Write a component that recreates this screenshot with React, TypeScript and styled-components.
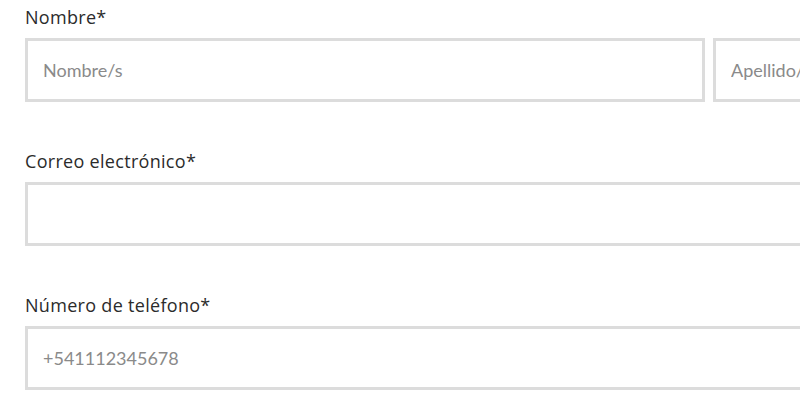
import React from "react";
import styled, { createGlobalStyle } from "styled-components";

const Global = createGlobalStyle`
  html, body { margin: 0; padding: 0; background: #fff; overflow: hidden; }
  body { font-family: "Lato", "Noto Sans", sans-serif; }
`;

const Form = styled.form`
  width: 1368px;
  padding: 6px 0 0 25px;
  display: flex;
  flex-direction: column;
  gap: 48px;
`;

const Field = styled.div`
  display: flex;
  flex-direction: column;
`;

const Label = styled.label`
  font-family: "Open Sans", "Noto Sans", sans-serif;
  font-size: 18px;
  letter-spacing: 0.3px;
  line-height: 22px;
  color: #2b2b2b;
  margin-bottom: 10px;
`;

const Row = styled.div`
  display: grid;
  grid-template-columns: 680px 680px;
  gap: 8px;
`;

const Input = styled.input`
  box-sizing: border-box;
  height: 64px;
  width: 100%;
  border: 3px solid #dcdcdc;
  border-radius: 0;
  padding: 0 15px;
  font-family: "Lato", "Noto Sans", sans-serif;
  font-size: 18px;
  color: #333;
  outline: none;
  background: #fff;
  &::placeholder { color: #8a8a8a; }
`;

export default function App() {
  return (
    <>
      <Global />
      <Form>
        <Field>
          <Label>Nombre*</Label>
          <Row>
            <Input placeholder="Nombre/s" />
            <Input placeholder="Apellido/s" />
          </Row>
        </Field>
        <Field>
          <Label>Correo electrónico*</Label>
          <Input />
        </Field>
        <Field>
          <Label>Número de teléfono*</Label>
          <Input placeholder="+541112345678" />
        </Field>
      </Form>
    </>
  );
}
